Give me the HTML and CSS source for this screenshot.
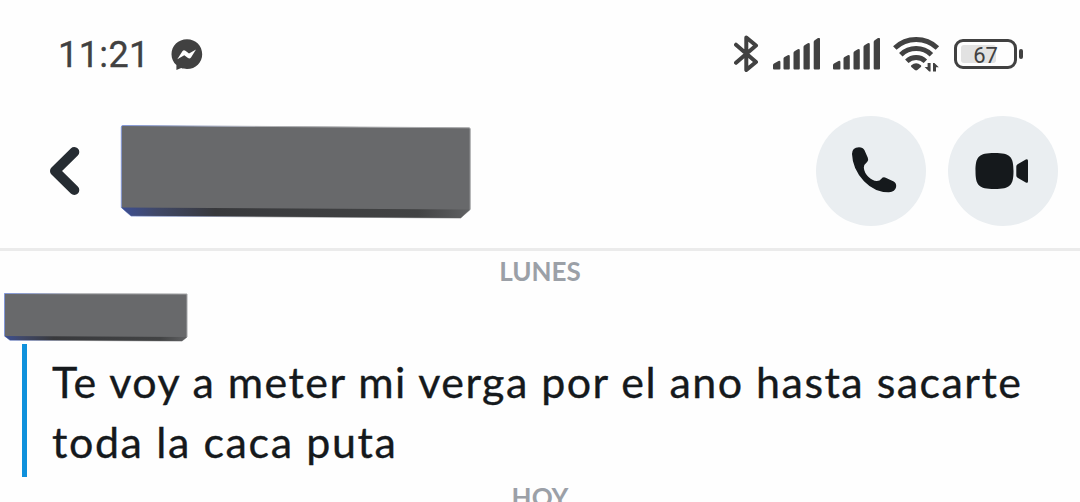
FILE: index.html
```
<!DOCTYPE html>
<html lang="es">
  <head>
    <meta charset="UTF-8" />
    <meta name="viewport" content="width=device-width, initial-scale=1.0" />
    <title>Chat</title>
    <link rel="stylesheet" href="styles.css">
  </head>
  <body>
    <div class="status-bar">
      <span class="time">11:21</span>
      <svg class="messenger" width="32" height="32" viewBox="0 0 32 32">
        <path fill="#414141" d="M16 .2C7.300.2.500 6.800.500 15.200c0 4.400 1.900 8.200 4.900 10.900V31l4.800-1.900c1.700.6 3.500.9 5.800.9 8.700 0 15.200-6.400 15.200-14.800S24.700.2 16 .2z" />
        <path fill="#fff" d="M6.300 20.300l5.100-8c.8-1.200 2-1.300 3-.5l3.600 2.700 7-4-5 8c-.8 1.100-2 1.300-3 .5l-3.700-2.700z" />
      </svg>
      <div class="indicators">
        <svg class="bluetooth" width="26" height="40" viewBox="0 0 26 40">
          <path fill="none" stroke="#414141" stroke-width="4" stroke-linejoin="round" stroke-linecap="round" d="M2 10.700L22 28 12.300 36V3.500L22 11.500 2 28.800" />
        </svg>
        <svg class="signal" width="48" height="32" viewBox="0 0 48 32">
          <path id="bars" fill="#414141" d="M0 30.500v-3.500q0-1 1-1.500l4.500-2.600q1.900-.4 1.900 1.200V30.500q0 1-1 1H1q-1 0-1-1zM10.500 30.500V20.500q0-1 1-1.500l3.300-1.800q2-.7 2 1.200V30.500q0 1-1 1h-4.300q-1 0-1-1zM20.500 30.500V15q0-1 1-1.700l3.300-2q2-.8 2 1.200v18q0 1-1 1h-4.300q-1 0-1-1zM30.500 30.500V9q0-1 1-1.700l3.300-2q2-.8 2 1.200V30.500q0 1-1 1h-4.300q-1 0-1-1zM40.700 30.500V4q0-1 1-1.700l3.300-2.200q2-.8 2 1.200V30.500q0 1-1 1h-4.300q-1 0-1-1z" />
        </svg>
        <svg class="signal" width="48" height="32" viewBox="0 0 48 32">
          <use href="#bars" />
        </svg>
        <svg class="wifi" width="48" height="36" viewBox="0 0 48 36">
          <g fill="none" stroke="#414141" stroke-width="5">
            <path d="M1.800 12a31 31 0 0 1 42.600 0" />
            <path d="M7.800 18.700a22 22 0 0 1 30.600 0" />
            <path d="M13.800 25.200a13.600 13.600 0 0 1 18.600 0" />
          </g>
          <path fill="#414141" d="M18.300 29.200q4.800-3.800 9.600 0 .8.900 0 1.700l-3.600 3.200q-1.200.9-2.400 0l-3.600-3.200q-.8-.8 0-1.700z" />
          <path fill="#414141" d="M34.600 27h3v8.500h-1.400l-4.600-4.500h3zM40 35.500V27h1.400l4.400 4.300h-2.800v4.200z" />
        </svg>
        <div class="battery">
          <div class="charge"></div>
          <span>67</span>
        </div>
        <div class="battery-tip"></div>
      </div>
    </div>

    <header class="chat-header">
      <svg class="back" width="32" height="52" viewBox="0 0 32 52">
        <path fill="none" stroke="#262c32" stroke-width="10" stroke-linecap="round" stroke-linejoin="round" d="M26.300 7L7 26l19.300 19" />
      </svg>
      <svg class="name-block" width="352" height="96" viewBox="0 0 352 96">
        <defs>
          <linearGradient id="edge">
            <stop offset="0" stop-color="#3c4e93" />
            <stop offset=".1" stop-color="#404868" />
            <stop offset=".27" stop-color="#38393c" />
            <stop offset=".85" stop-color="#424344" />
            <stop offset="1" stop-color="#606163" />
          </linearGradient>
          <linearGradient id="outline">
            <stop offset="0" stop-color="#8297d8" />
            <stop offset=".4" stop-color="#b0b1b4" />
            <stop offset="1" stop-color="#a5a6a8" />
          </linearGradient>
        </defs>
        <path fill="#68696b" stroke="url(#outline)" d="M3 1.500l346 2.300q1.200 0 1.200 1.200V85.500l-9.500 8.500L11 92 1.300 83.500V3q0-1.500 1.700-1.500z" />
        <path fill="url(#edge)" d="M1.300 83.500l9.700 8.200 329.500 2.200 9.500-8.500z" />
      </svg>
      <div class="calls">
        <div class="round-button">
          <svg width="110" height="110" viewBox="0 0 110 110">
            <path fill="#15191c" d="M36 38q0-6.500 7-6.800 4 0 5.500 3l3.300 7.500q1 2.500-.5 4-3.300 2.500-3.500 6 .5 5 4.500 9 4 4 8.500 4.400 3 0 4.600-2.400 1.700-2 4.300-1l8 3.700q3 1.600 2.400 5.600-1 5-7.100 5.200-14 .3-25-11Q36.500 53 36 38z" />
          </svg>
        </div>
        <div class="round-button">
          <svg width="110" height="110" viewBox="0 0 110 110">
            <path fill="#15191c" d="M27.500 55c0-14 3-18 19-18s19 4 19 18-3 18-19 18-19-4-19-18zM68.300 50.500q0-1.500 1.300-2.300l8.200-4.700q2.200-1 2.200 1.200v20.600q0 2.200-2.200 1.200l-8.200-4.700q-1.300-.8-1.300-2.300z" />
          </svg>
        </div>
      </div>
    </header>

    <main class="messages">
      <div class="day">LUNES</div>
      <svg class="sender-block" width="184" height="50" viewBox="0 0 184 50">
        <path fill="#68696b" stroke="url(#outline)" d="M.5.500l182.500.5v43l-5 4L6 47.200.500 43z" />
        <path fill="url(#edge)" d="M.5 43l5.500 4 172 1 5-4z" />
      </svg>
      <div class="message">
        <p class="first-line">Te voy a meter mi verga por el ano hasta sacarte</p>
        <p class="second-line">toda la caca puta</p>
      </div>
      <div class="day">HOY</div>
    </main>
  </body>
</html>
```
FILE: styles.css
```
* {
  box-sizing: border-box;
}
body {
  margin: 0;
  height: 502px;
  overflow: hidden;
  background-color: #fefefe;
  font-family: Lato, "Liberation Sans", sans-serif;
}
svg {
  display: block;
  flex: none;
}

/* status bar */
.status-bar {
  display: flex;
  align-items: center;
  height: 108px;
  padding: 0 57px 0 58px;
}
.time {
  font: 36px/40px Roboto, sans-serif;
  color: #414141;
  letter-spacing: 0.4px;
  width: 113px;
  margin-top: 2px;
  -webkit-text-stroke: 0.3px #414141;
}
.messenger {
  margin-top: 1px;
}
.indicators {
  display: flex;
  align-items: center;
  margin-left: auto;
}
.bluetooth {
  margin-right: 13px;
}
.signal {
  margin-right: 12px;
}
.wifi {
  margin-right: 13px;
}
.battery {
  position: relative;
  width: 63px;
  height: 30px;
  border: 3px solid #414141;
  border-radius: 9px;
  color: #414141;
  font: 22px/27px Roboto, sans-serif;
  text-align: center;
}
.battery span {
  position: relative;
}
.charge {
  position: absolute;
  left: 4px;
  top: 3px;
  width: 35px;
  height: 18px;
  border-radius: 3px;
  background-color: #e2e2e2;
}
.battery-tip {
  width: 4px;
  height: 10px;
  margin-left: 2px;
  border-radius: 2px;
  background-color: #414141;
}

/* header */
.chat-header {
  display: flex;
  align-items: flex-start;
  height: 143px;
  padding: 8px 22px 0 48px;
  border-bottom: 3px solid #ebebeb;
}
.back {
  margin-top: 29px;
}
.name-block {
  margin: 8px 0 0 40px;
}
.calls {
  display: flex;
  gap: 22px;
  margin-left: auto;
}
.round-button {
  width: 110px;
  height: 110px;
  border-radius: 50%;
  background-color: #eaeef1;
}

/* messages */
.day {
  height: 42px;
  font-size: 26px;
  line-height: 41px;
  font-weight: bold;
  text-align: center;
  color: #9ba0a7;
}
.sender-block {
  margin-left: 4px;
}
.message {
  height: 133px;
  margin: 1px 0 0 22px;
  padding: 8px 0 0 25px;
  border-left: 5px solid #0f91dc;
  color: #15191c;
  font-size: 43px;
  line-height: 60px;
  white-space: nowrap;
  -webkit-text-stroke: 0.35px #15191c;
}
.message p {
  margin: 0;
}
.first-line {
  letter-spacing: 1.46px;
}
.second-line {
  letter-spacing: 1.6px;
}
```
